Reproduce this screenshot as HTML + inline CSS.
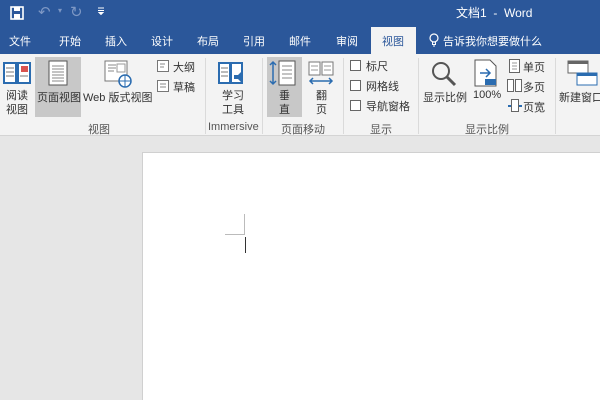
<!DOCTYPE html><html><head><meta charset="utf-8"><style>
*{margin:0;padding:0;box-sizing:border-box}
body{width:600px;height:400px;overflow:hidden;background:#e6e6e6;font-family:"Liberation Sans","Noto Sans CJK SC",sans-serif;font-size:11px;color:#333;position:relative}
.a{position:absolute;white-space:nowrap}
.top{position:absolute;left:0;top:0;width:600px;height:54px;background:#2b579a}
.w{color:#fff;font-size:11px}
.rib{position:absolute;left:0;top:54px;width:600px;height:82px;background:#f3f3f3;border-bottom:1px solid #d4d4d4}
.sep{position:absolute;top:58px;width:1px;height:76px;background:#dadada}
.gl{color:#555;font-size:11px}
.cb{position:absolute;width:11px;height:11px;border:1px solid #666;background:#fff}
</style></head><body>
<div class="top"></div>
<svg class="a" style="left:9px;top:5px" width="16" height="16" viewBox="0 0 16 16"><rect x="2" y="2" width="12" height="12" fill="none" stroke="#fff" stroke-width="1.6"/><rect x="5" y="2" width="6" height="4" fill="#fff"/><rect x="5" y="9" width="6" height="5" fill="#fff"/></svg>
<div class="a" style="left:38px;top:3px;color:#7d97c4;font-size:15px">↶</div>
<div class="a" style="left:58px;top:6px;color:#7d97c4;font-size:8px">▾</div>
<div class="a" style="left:70px;top:3px;color:#7d97c4;font-size:15px">↻</div>
<svg class="a" style="left:97px;top:7px" width="8" height="8"><path d="M1 1h6M1 3.5h6M2 5.5l2 2 2-2z" stroke="#fff" fill="#fff"/></svg>
<div class="a w" style="left:456px;top:4px;font-size:12px">文档1 &nbsp;- &nbsp;Word</div>
<div class="a w" style="left:9px;top:33px">文件</div>
<div class="a w" style="left:59px;top:33px">开始</div>
<div class="a w" style="left:105px;top:33px">插入</div>
<div class="a w" style="left:151px;top:33px">设计</div>
<div class="a w" style="left:197px;top:33px">布局</div>
<div class="a w" style="left:243px;top:33px">引用</div>
<div class="a w" style="left:289px;top:33px">邮件</div>
<div class="a w" style="left:336px;top:33px">审阅</div>
<div class="a" style="left:371px;top:27px;width:45px;height:28px;background:#f3f3f3"></div>
<div class="a" style="left:382px;top:33px;color:#2b579a">视图</div>
<svg class="a" style="left:429px;top:33px" width="10" height="14"><circle cx="5" cy="5" r="4" fill="none" stroke="#fff" stroke-width="1.2"/><path d="M3.5 9v2.5h3V9M4 13h2" stroke="#fff" fill="none"/></svg>
<div class="a w" style="left:443px;top:33px">告诉我你想要做什么</div>
<div class="rib"></div>
<div class="a" style="left:35px;top:57px;width:46px;height:60px;background:#c8c8c8"></div>
<div class="a" style="left:267px;top:57px;width:35px;height:60px;background:#c8c8c8"></div>
<svg class="a" style="left:3px;top:60px" width="28" height="26"><rect x="1" y="3" width="12" height="20" fill="#fff" stroke="#2b6cb0" stroke-width="2"/><rect x="15" y="3" width="12" height="20" fill="#fff" stroke="#2b6cb0" stroke-width="2"/><path d="M3 8h8M3 12h8M3 16h8M17 16h8" stroke="#777"/><rect x="18" y="6" width="7" height="6" fill="#d9534f"/></svg>
<svg class="a" style="left:48px;top:60px" width="20" height="26"><rect x="1" y="1" width="18" height="24" fill="#fff" stroke="#555"/><path d="M4 6h12M4 9h12M4 12h12M4 15h12M4 18h12M4 21h12" stroke="#888"/></svg>
<svg class="a" style="left:104px;top:60px" width="28" height="28"><rect x="1" y="1" width="22" height="20" fill="#fff" stroke="#777"/><path d="M4 5h8M4 8h8M4 11h6" stroke="#888"/><rect x="13" y="4" width="8" height="8" fill="none" stroke="#999"/><circle cx="21" cy="21" r="6" fill="#fff" stroke="#2b6cb0" stroke-width="1.5"/><path d="M15 21h12M21 15v12" stroke="#2b6cb0"/></svg>
<svg class="a" style="left:157px;top:60px" width="12" height="12"><rect x=".5" y=".5" width="11" height="11" fill="#fff" stroke="#777"/><path d="M3 4h5M3 7h4" stroke="#888"/></svg>
<div class="a" style="left:173px;top:59px">大纲</div>
<svg class="a" style="left:157px;top:80px" width="12" height="12"><rect x=".5" y=".5" width="11" height="11" fill="#fff" stroke="#777"/><path d="M3 4h6M3 7h6" stroke="#888"/></svg>
<div class="a" style="left:173px;top:79px">草稿</div>
<div class="a" style="left:6px;top:89px;line-height:14px;text-align:center">阅读<br>视图</div>
<div class="a" style="left:37px;top:89px">页面视图</div>
<div class="a" style="left:83px;top:89px">Web 版式视图</div>
<div class="a gl" style="left:88px;top:121px">视图</div>
<div class="sep" style="left:205px"></div>
<svg class="a" style="left:218px;top:60px" width="30" height="28"><rect x="1" y="3" width="11" height="20" fill="#fff" stroke="#2b6cb0" stroke-width="2"/><rect x="13" y="3" width="11" height="20" fill="#fff" stroke="#2b6cb0" stroke-width="2"/><path d="M3 8h7M3 12h7M3 16h7" stroke="#777"/><path d="M16 15h4l5-5v14l-5-5h-4z" fill="#2b6cb0"/></svg>
<div class="a" style="left:222px;top:89px;line-height:14px;text-align:center">学习<br>工具</div>
<div class="a gl" style="left:208px;top:121px">Immersive</div>
<div class="sep" style="left:262px"></div>
<svg class="a" style="left:268px;top:60px" width="30" height="26"><path d="M5 2v22M2 5l3-3 3 3M2 21l3 3 3-3" stroke="#2b6cb0" fill="none" stroke-width="1.5"/><rect x="11" y="1" width="16" height="24" fill="#fff" stroke="#555"/><path d="M14 6h10M14 10h10M14 14h10M14 18h10" stroke="#888"/></svg>
<div class="a" style="left:279px;top:89px;line-height:14px">垂<br>直</div>
<svg class="a" style="left:308px;top:61px" width="26" height="24"><rect x="1" y="1" width="11" height="13" fill="#fff" stroke="#777"/><rect x="14" y="1" width="11" height="13" fill="#fff" stroke="#777"/><path d="M3 5h7M3 9h7M16 5h7M16 9h7" stroke="#999"/><path d="M2 20h22M5 17l-3 3 3 3M21 17l3 3-3 3" stroke="#2b6cb0" fill="none" stroke-width="1.5"/></svg>
<div class="a" style="left:316px;top:89px;line-height:14px">翻<br>页</div>
<div class="a gl" style="left:281px;top:121px">页面移动</div>
<div class="sep" style="left:343px"></div>
<div class="cb" style="left:350px;top:60px"></div><div class="a" style="left:366px;top:58px">标尺</div>
<div class="cb" style="left:350px;top:80px"></div><div class="a" style="left:366px;top:78px">网格线</div>
<div class="cb" style="left:350px;top:100px"></div><div class="a" style="left:366px;top:98px">导航窗格</div>
<div class="a gl" style="left:370px;top:121px">显示</div>
<div class="sep" style="left:418px"></div>
<svg class="a" style="left:430px;top:60px" width="28" height="28"><circle cx="11" cy="11" r="8" fill="none" stroke="#555" stroke-width="2"/><path d="M17 17l8 8" stroke="#555" stroke-width="3"/></svg>
<div class="a" style="left:423px;top:89px">显示比例</div>
<svg class="a" style="left:474px;top:59px" width="24" height="28"><path d="M1 1h15l6 6v20H1z" fill="#fff" stroke="#555"/><path d="M6 14h10M12 10l4 4-4 4" stroke="#2b6cb0" fill="none" stroke-width="1.5"/><rect x="11" y="20" width="11" height="6" fill="#2b6cb0"/></svg>
<div class="a" style="left:473px;top:89px">100%</div>
<svg class="a" style="left:509px;top:59px" width="12" height="14"><rect x=".5" y=".5" width="10" height="13" fill="#fff" stroke="#666"/><path d="M3 4h5M3 7h5M3 10h5" stroke="#999"/></svg><div class="a" style="left:523px;top:59px">单页</div>
<svg class="a" style="left:507px;top:79px" width="16" height="14"><rect x=".5" y=".5" width="6" height="12" fill="#fff" stroke="#666"/><rect x="8.5" y=".5" width="6" height="12" fill="#fff" stroke="#666"/></svg><div class="a" style="left:523px;top:79px">多页</div>
<svg class="a" style="left:507px;top:99px" width="16" height="14"><rect x="4.5" y=".5" width="7" height="12" fill="#fff" stroke="#666"/><path d="M1 7h3M12 7h3" stroke="#2b6cb0" stroke-width="2"/></svg><div class="a" style="left:523px;top:99px">页宽</div>
<div class="a gl" style="left:465px;top:121px">显示比例</div>
<div class="sep" style="left:555px"></div>
<svg class="a" style="left:567px;top:60px" width="33" height="28"><rect x="1" y="1" width="20" height="12" fill="#fff" stroke="#666"/><rect x="1" y="1" width="20" height="3" fill="#666"/><rect x="10" y="13" width="20" height="12" fill="#fff" stroke="#2b6cb0"/><rect x="10" y="13" width="20" height="3" fill="#2b6cb0"/></svg>
<div class="a" style="left:559px;top:89px">新建窗口</div>
<div class="a" style="left:142px;top:152px;width:458px;height:248px;background:#fff;border-left:1px solid #d0d0d0;border-top:1px solid #d0d0d0"></div>
<div class="a" style="left:244px;top:214px;width:1px;height:21px;background:#bbb"></div>
<div class="a" style="left:225px;top:234px;width:20px;height:1px;background:#bbb"></div>
<div class="a" style="left:245px;top:237px;width:1px;height:16px;background:#333"></div>
</body></html>
